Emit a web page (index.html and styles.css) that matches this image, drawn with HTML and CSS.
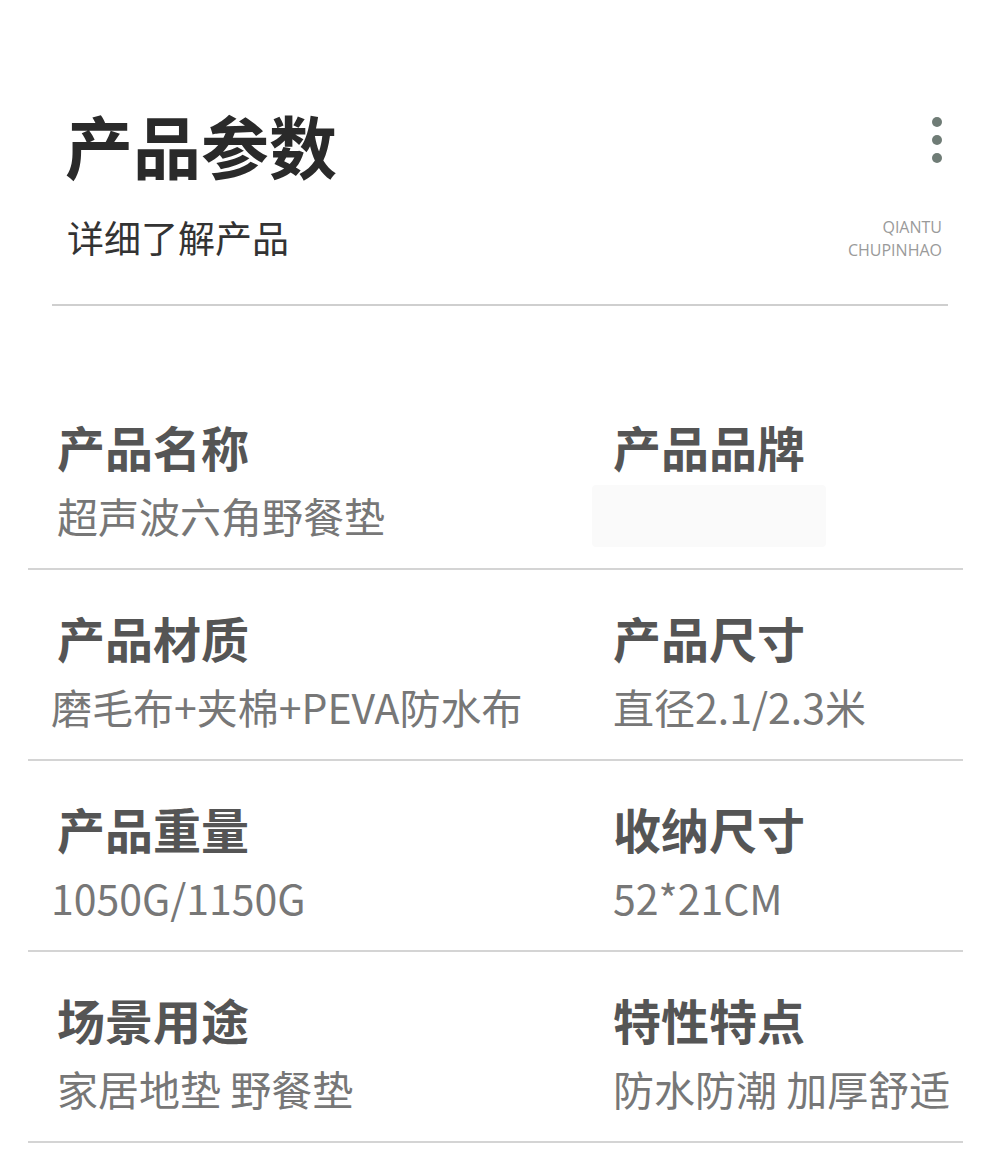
FILE: index.html
```html
<!DOCTYPE html>
<html lang="zh-CN">
<head>
    <meta charset="UTF-8">
    <meta name="viewport" content="width=device-width, initial-scale=1.0">
    <title>产品参数</title>
    <link rel="stylesheet" href="styles.css">
</head>
<body>

    <!-- Section header -->
    <header class="section-head">
        <div class="head-text">
            <h1>产品参数</h1>
            <p class="subtitle">详细了解产品</p>
        </div>
        <div class="head-side">
            <div class="dots">
                <span></span>
                <span></span>
                <span></span>
            </div>
            <div class="brand-mark">QIANTU<br>CHUPINHAO</div>
        </div>
    </header>

    <!-- Parameter rows -->
    <div class="param-list">
        <div class="param-row">
            <div class="param">
                <div class="param-label">产品名称</div>
                <div class="param-value">超声波六角野餐垫</div>
            </div>
            <div class="param">
                <div class="param-label">产品品牌</div>
                <div class="param-value"><span class="blurred"></span></div>
            </div>
        </div>
        <div class="param-row">
            <div class="param">
                <div class="param-label">产品材质</div>
                <div class="param-value shift">磨毛布+夹棉+PEVA防水布</div>
            </div>
            <div class="param">
                <div class="param-label">产品尺寸</div>
                <div class="param-value">直径2.1/2.3米</div>
            </div>
        </div>
        <div class="param-row">
            <div class="param">
                <div class="param-label">产品重量</div>
                <div class="param-value shift">1050G/1150G</div>
            </div>
            <div class="param">
                <div class="param-label">收纳尺寸</div>
                <div class="param-value">52*21CM</div>
            </div>
        </div>
        <div class="param-row">
            <div class="param">
                <div class="param-label">场景用途</div>
                <div class="param-value">家居地垫 野餐垫</div>
            </div>
            <div class="param">
                <div class="param-label">特性特点</div>
                <div class="param-value">防水防潮 加厚舒适</div>
            </div>
        </div>
    </div>

</body>
</html>
```

FILE: styles.css
```css
body {
    font-family: 'Noto Sans CJK SC', 'Noto Sans', sans-serif;
    background-color: #ffffff;
    margin: 0;
    padding: 0;
}
.section-head {
    display: flex;
    justify-content: space-between;
    margin: 0 42px 0 52px;
    padding: 111px 6px 48px 13px;
    border-bottom: 2px solid #cfcfcf;
}
h1 {
    margin: 0;
    font-size: 68px;
    line-height: 68px;
    font-weight: 700;
    color: #2a2a2a;
}
.subtitle {
    margin: 40px 0 0 2px;
    font-size: 37px;
    line-height: 37px;
    color: #333;
}
.head-side {
    display: flex;
    flex-direction: column;
    justify-content: space-between;
    align-items: flex-end;
}
.dots {
    display: flex;
    flex-direction: column;
    gap: 8px;
    padding: 6px 0 0 0;
}
.dots span {
    width: 10px;
    height: 10px;
    border-radius: 50%;
    background-color: #6f7c76;
}
.brand-mark {
    font-family: 'Open Sans', sans-serif;
    font-size: 16px;
    line-height: 23px;
    text-align: right;
    color: #9a9a9a;
    margin-bottom: -6px;
}
.param-list {
    margin: 73px 27px 0 28px;
}
.param-row {
    display: grid;
    grid-template-columns: 556px 1fr;
    padding: 43px 0 32px 29px;
    border-bottom: 2px solid #d4d4d4;
}
.param-label {
    font-size: 48px;
    line-height: 48px;
    font-weight: 700;
    color: #555;
}
.param-value {
    margin-top: 25px;
    font-size: 41px;
    line-height: 41px;
    color: #777;
    white-space: nowrap;
}
.param-value.shift {
    margin-left: -6px;
}
.blurred {
    display: block;
    width: 234px;
    height: 62px;
    margin: -10px 0 -11px -21px;
    background-color: #fafafa;
    border-radius: 4px;
}
```
